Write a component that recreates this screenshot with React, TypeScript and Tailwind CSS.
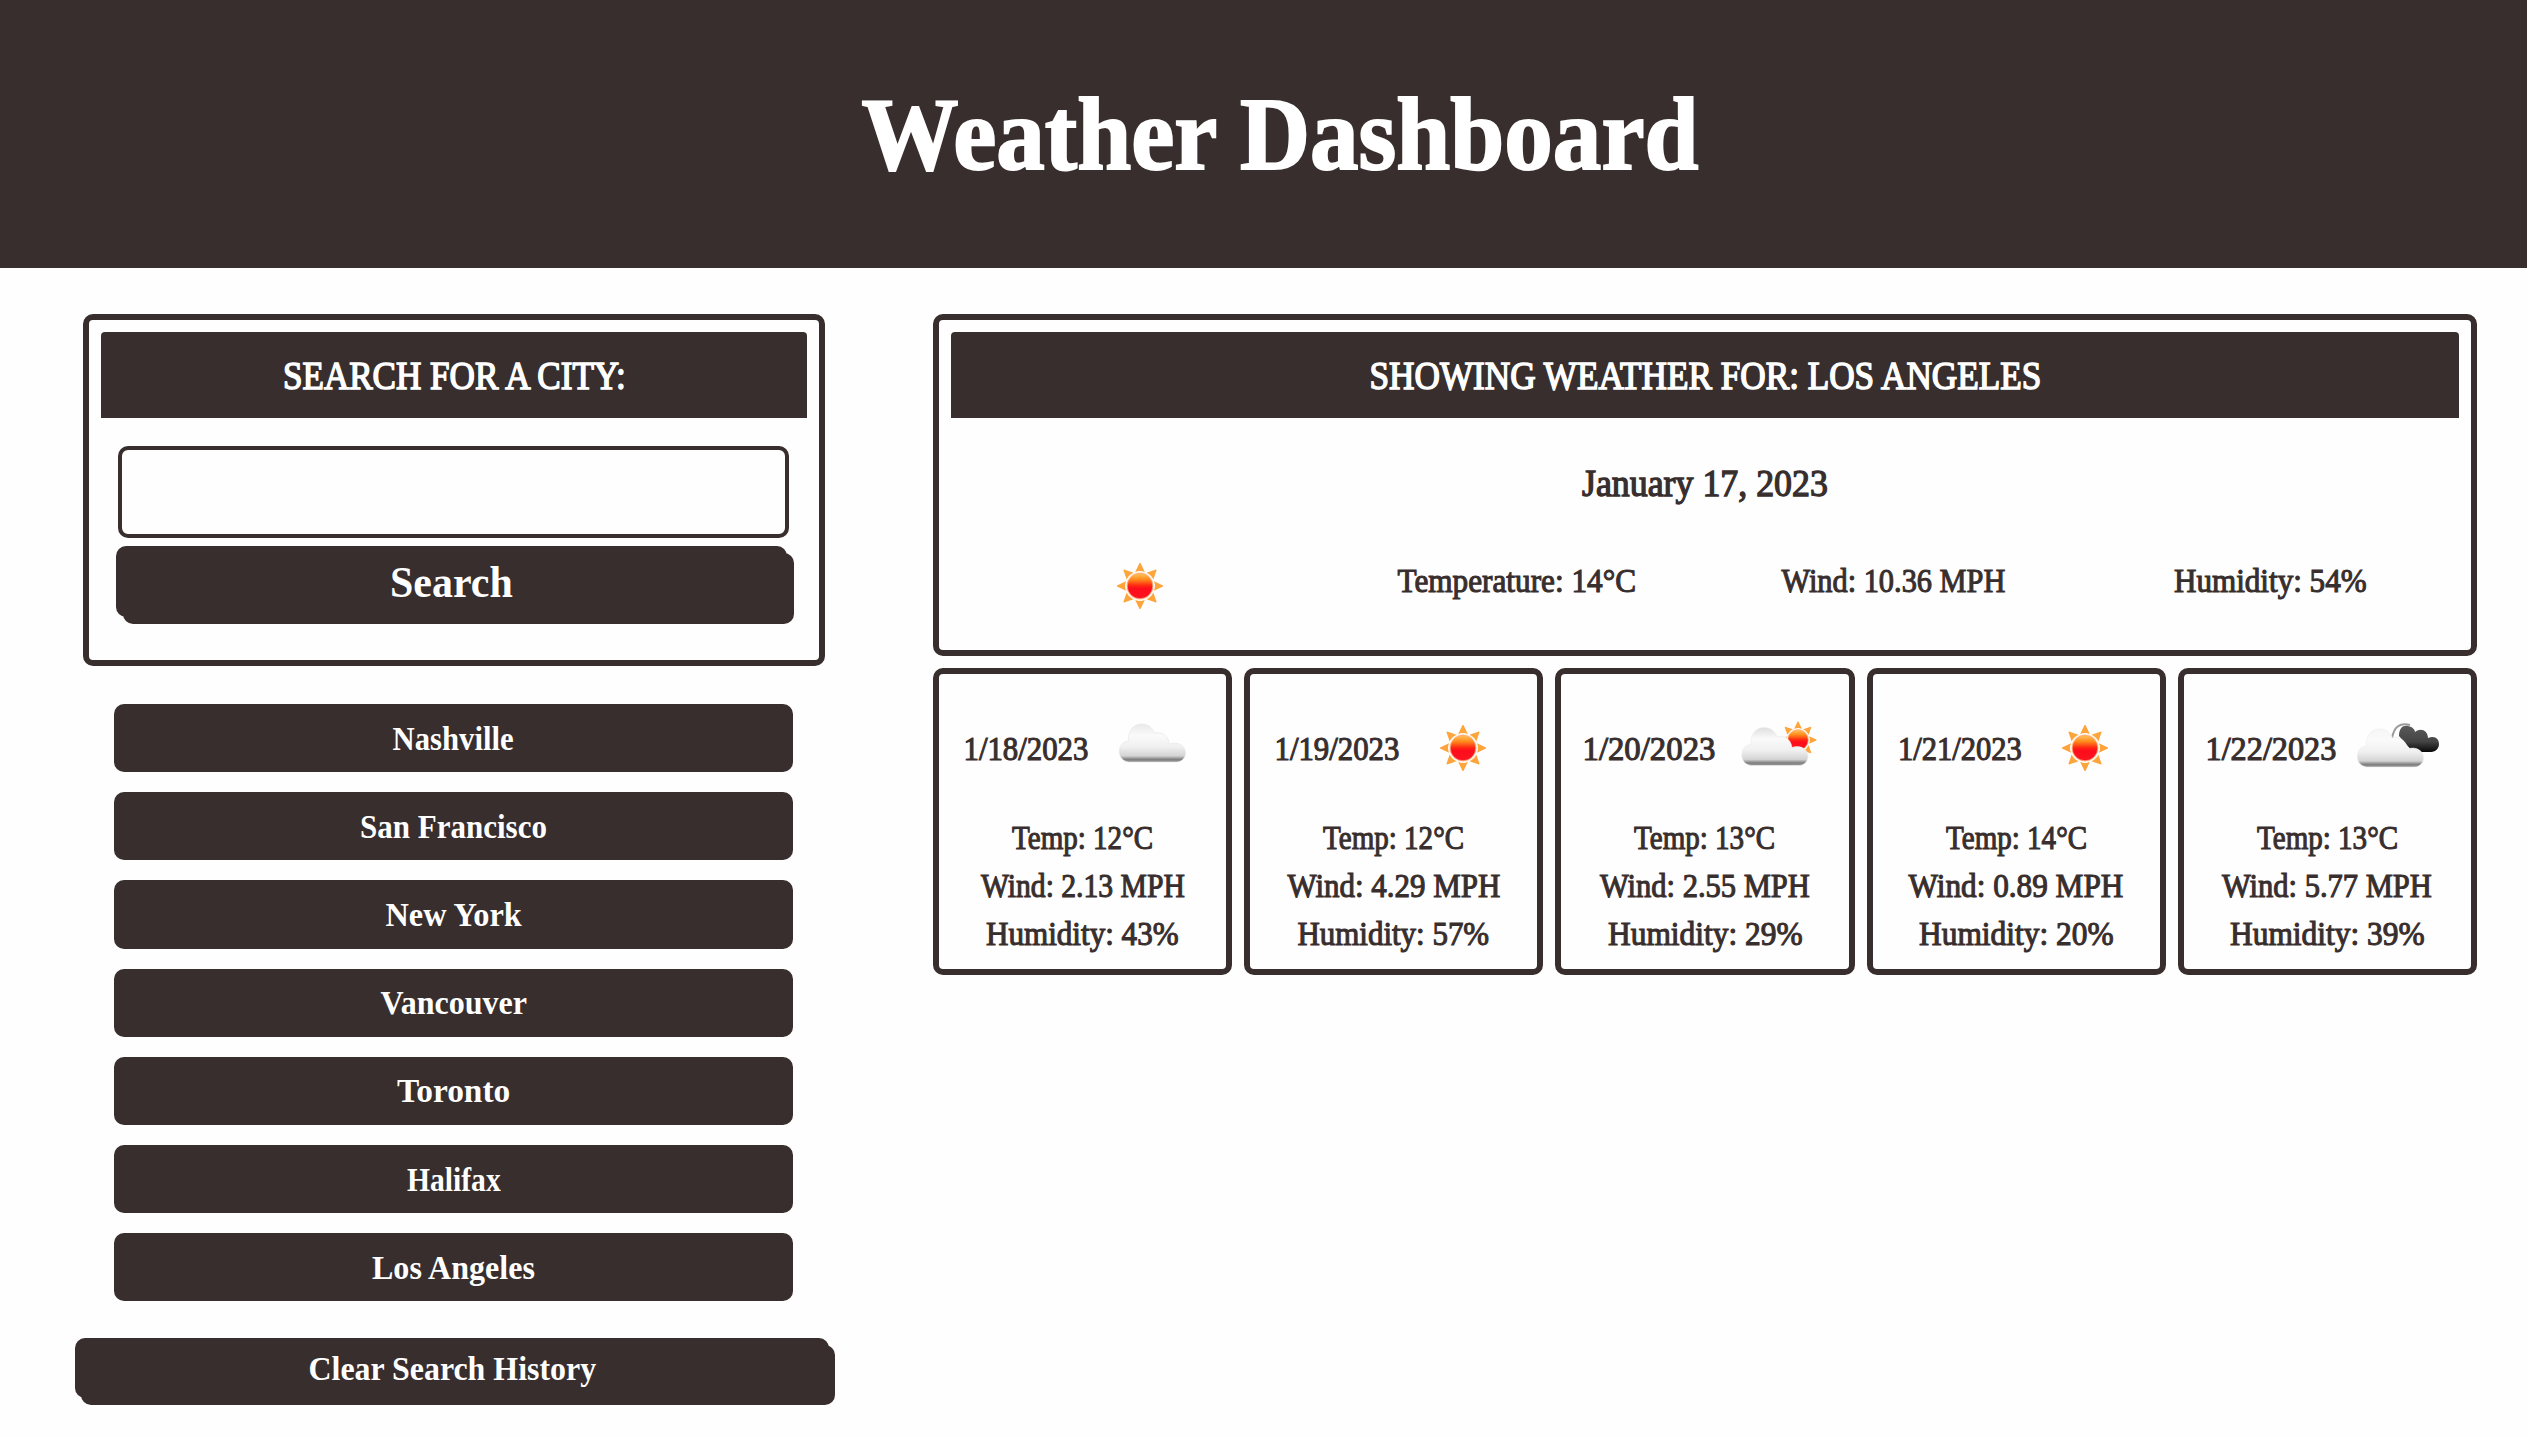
import { useLayoutEffect, useRef, useState } from "react";

/** A line of text condensed or widened to an exact width. */
function Fit({ text, width, className = "" }: { text: string; width: number; className?: string }) {
  const ref = useRef<HTMLSpanElement>(null);
  const [scale, setScale] = useState(1);
  useLayoutEffect(() => {
    if (ref.current) setScale(width / ref.current.offsetWidth);
  }, [text, width]);
  return (
    <span className="inline-flex justify-center" style={{ width }}>
      <span
        ref={ref}
        className={`inline-block shrink-0 whitespace-nowrap ${className}`}
        style={{ transform: `scaleX(${scale})` }}
      >
        {text}
      </span>
    </span>
  );
}

const RAYS = [0, 45, 90, 135, 180, 225, 270, 315];

function Sun({ id }: { id: string }) {
  return (
    <g>
      <defs>
        <linearGradient id={id} x1="0" y1="0" x2="0" y2="1">
          <stop offset="0" stopColor="#ffc65a" />
          <stop offset="0.25" stopColor="#ff8a1c" />
          <stop offset="0.48" stopColor="#ff2a12" />
          <stop offset="0.6" stopColor="#fd0d1b" />
          <stop offset="1" stopColor="#fd1420" />
        </linearGradient>
      </defs>
      {RAYS.map((a) => (
        <path key={a} d="M-4.800 -14 Q0 -16 4.800 -14 L0.500 -23 L-0.500 -23 Z" fill="#fda43a" transform={`rotate(${a})`} />
      ))}
      <circle r="14.2" fill="#fff0d8" />
      <circle r="12.8" fill={`url(#${id})`} stroke="#ffa07a" strokeWidth="0.8" />
    </g>
  );
}

function CloudFill({ id, top }: { id: string; top: string }) {
  return (
    <defs>
      <linearGradient id={id} x1="0" y1="0" x2="0" y2="1">
        <stop offset="0" stopColor={top} />
        <stop offset="0.3" stopColor="#fafafa" />
        <stop offset="0.6" stopColor="#f0f0f0" />
        <stop offset="0.84" stopColor="#d4d4d4" />
        <stop offset="0.93" stopColor="#808080" />
        <stop offset="1" stopColor="#989898" />
      </linearGradient>
    </defs>
  );
}

const CLOUD =
  "M10 39 C3 38 0 32 1 27 C1.500 21 6 18 10 18 C9 8 15 1 23 1 C30 1 34 5 36 10 C43 8 50 13 51 21 C60 18 67 23 67 30 C67 35 63 39 58 39 Z";

type Kind = "sun" | "cloud" | "partly" | "broken";

function WeatherIcon({ kind, id }: { kind: Kind; id: string }) {
  return (
    <svg viewBox="0 0 100 100" className="h-[100px] w-[100px] shrink-0">
      {kind === "sun" && (
        <g transform="translate(50 50)">
          <Sun id={id} />
        </g>
      )}
      {kind === "cloud" && (
        <g transform="translate(16.500 25)">
          <CloudFill id={id} top="#e9e9e9" />
          <path d={CLOUD} fill={`url(#${id})`} stroke="#e6e6e6" strokeWidth="0.6" />
        </g>
      )}
      {kind === "partly" && (
        <g>
          <g transform="translate(70 42) scale(0.8)">
            <Sun id={`${id}-sun`} />
          </g>
          <g transform="translate(13 28.500)">
            <CloudFill id={id} top="#dedede" />
            <path d={CLOUD} fill={`url(#${id})`} stroke="#ececec" strokeWidth="0.6" />
          </g>
        </g>
      )}
      {kind === "broken" && (
        <g>
          <defs>
            <linearGradient id={`${id}-dark`} x1="0" y1="0" x2="0" y2="1">
              <stop offset="0" stopColor="#5a5a5a" />
              <stop offset="0.6" stopColor="#444" />
              <stop offset="1" stopColor="#080808" />
            </linearGradient>
          </defs>
          <path d="M43 40 C45 29 51 24 61 27" fill="none" stroke="#999" strokeWidth="2" />
          <path
            d="M50 38 C50 30 54 27 59 28 C64 29 66 32 66 34 C72 29 79 33 79 40 C86 37 90 41 90 46 C90 50 87 54 82 54 L64 54 Z"
            fill={`url(#${id}-dark)`}
          />
          <g transform="translate(7.500 30)">
            <CloudFill id={id} top="#f6f6f6" />
            <path d={CLOUD} fill={`url(#${id})`} stroke="#ededed" strokeWidth="0.6" />
          </g>
        </g>
      )}
    </svg>
  );
}

const HISTORY = [
  { city: "Nashville", w: 121 },
  { city: "San Francisco", w: 187 },
  { city: "New York", w: 136 },
  { city: "Vancouver", w: 147 },
  { city: "Toronto", w: 113 },
  { city: "Halifax", w: 94 },
  { city: "Los Angeles", w: 163 },
];

const FORECAST: { date: [string, number]; icon: Kind; lines: [string, number][] }[] = [
  { date: ["1/18/2023", 125], icon: "cloud", lines: [["Temp: 12°C", 141], ["Wind: 2.13 MPH", 204], ["Humidity: 43%", 193]] },
  { date: ["1/19/2023", 125], icon: "sun", lines: [["Temp: 12°C", 141], ["Wind: 4.29 MPH", 213], ["Humidity: 57%", 192]] },
  { date: ["1/20/2023", 133], icon: "partly", lines: [["Temp: 13°C", 141], ["Wind: 2.55 MPH", 210], ["Humidity: 29%", 195]] },
  { date: ["1/21/2023", 124], icon: "sun", lines: [["Temp: 14°C", 141], ["Wind: 0.89 MPH", 215], ["Humidity: 20%", 195]] },
  { date: ["1/22/2023", 131], icon: "broken", lines: [["Temp: 13°C", 141], ["Wind: 5.77 MPH", 210], ["Humidity: 39%", 195]] },
];

const BODY = "text-[34px] [-webkit-text-stroke:1.1px_#382e2d]";

export default function App() {
  return (
    <div className="h-[1436px] w-[2527px] overflow-hidden bg-[#fefefe] font-['Liberation_Serif',serif] text-[#382e2d]">
      <header className="flex h-[268px] items-center justify-center bg-[#382e2d] pb-1 pl-8 text-white">
        <h1 className="pt-1 text-[103px] leading-none font-bold [-webkit-text-stroke:2px_white]">
          <Fit text="Weather Dashboard" width={837} />
        </h1>
      </header>

      <main className="flex items-start pt-[46px]">
        <aside className="ml-[75px] flex w-[760px] flex-col">
          <section className="mr-[10px] ml-2 h-[352px] rounded-[10px] border-6 border-[#382e2d] p-3">
            <h2 className="flex h-[86px] items-center justify-center rounded-t bg-[#382e2d] pt-0.5 text-[41px] text-white [-webkit-text-stroke:1.6px_white]">
              <Fit text="SEARCH FOR A CITY:" width={343} />
            </h2>
            <input
              type="text"
              aria-label="City"
              className="mt-7 ml-[17px] block h-[92px] w-[671px] rounded-[10px] border-4 border-[#382e2d] bg-[#fefefe] px-4 text-[34px] outline-none"
            />
            <button className="mt-2 ml-[15px] flex h-[71px] w-[671px] items-center justify-center rounded-[10px] bg-[#382e2d] pt-0.5 text-[44px] font-bold text-white shadow-[7px_7px_0_#382e2d]">
              <Fit text="Search" width={123} />
            </button>
          </section>

          <div className="mt-[38px] mr-[42px] ml-[39px] flex flex-col gap-5">
            {HISTORY.map(({ city, w }) => (
              <button
                key={city}
                className="flex h-[68.2px] items-center justify-center rounded-[10px] bg-[#382e2d] text-[34px] font-bold text-white"
              >
                <Fit text={city} width={w} />
              </button>
            ))}
          </div>

          <button className="mt-[36.900px] flex h-[60px] w-[754px] items-center justify-center rounded-[10px] bg-[#382e2d] pt-px text-[34px] font-bold text-white shadow-[6px_7px_0_#382e2d]">
            <Fit text="Clear Search History" width={288} />
          </button>
        </aside>

        <div className="ml-[98px] w-[1544px]">
          <section className="h-[342px] rounded-[10px] border-6 border-[#382e2d] p-3">
            <h2 className="flex h-[86px] items-center justify-center rounded-t bg-[#382e2d] pt-0.5 text-[41px] text-white [-webkit-text-stroke:1.6px_white]">
              <Fit text="SHOWING WEATHER FOR: LOS ANGELES" width={672} />
            </h2>
            <div className="flex h-[129px] items-center justify-center pt-0.5 text-[37px] [-webkit-text-stroke:1.3px_#382e2d]">
              <Fit text="January 17, 2023" width={246} />
            </div>
            <div className={`grid h-[66px] grid-cols-4 place-items-center pt-px ${BODY}`}>
              <div className="-mb-[11px] flex h-[66px] items-center">
                <WeatherIcon kind="sun" id="today" />
              </div>
              <Fit text="Temperature: 14°C" width={239} />
              <Fit text="Wind: 10.36 MPH" width={224} />
              <Fit text="Humidity: 54%" width={193} />
            </div>
          </section>

          <section className="mt-3 grid grid-cols-5 gap-3">
            {FORECAST.map(({ date, icon, lines }) => (
              <article
                key={date[0]}
                className={`flex h-[306.5px] flex-col items-center rounded-[10px] border-6 border-[#382e2d] pt-6 ${BODY}`}
              >
                <div className="mb-[15px] flex items-center gap-[13px]">
                  <Fit text={date[0]} width={date[1]} />
                  <WeatherIcon kind={icon} id={`icon-${date[0].replace(/\//g, "-")}`} />
                </div>
                {lines.map(([text, w]) => (
                  <p key={text} className="flex h-12 items-center">
                    <Fit text={text} width={w} />
                  </p>
                ))}
              </article>
            ))}
          </section>
        </div>
      </main>
    </div>
  );
}
